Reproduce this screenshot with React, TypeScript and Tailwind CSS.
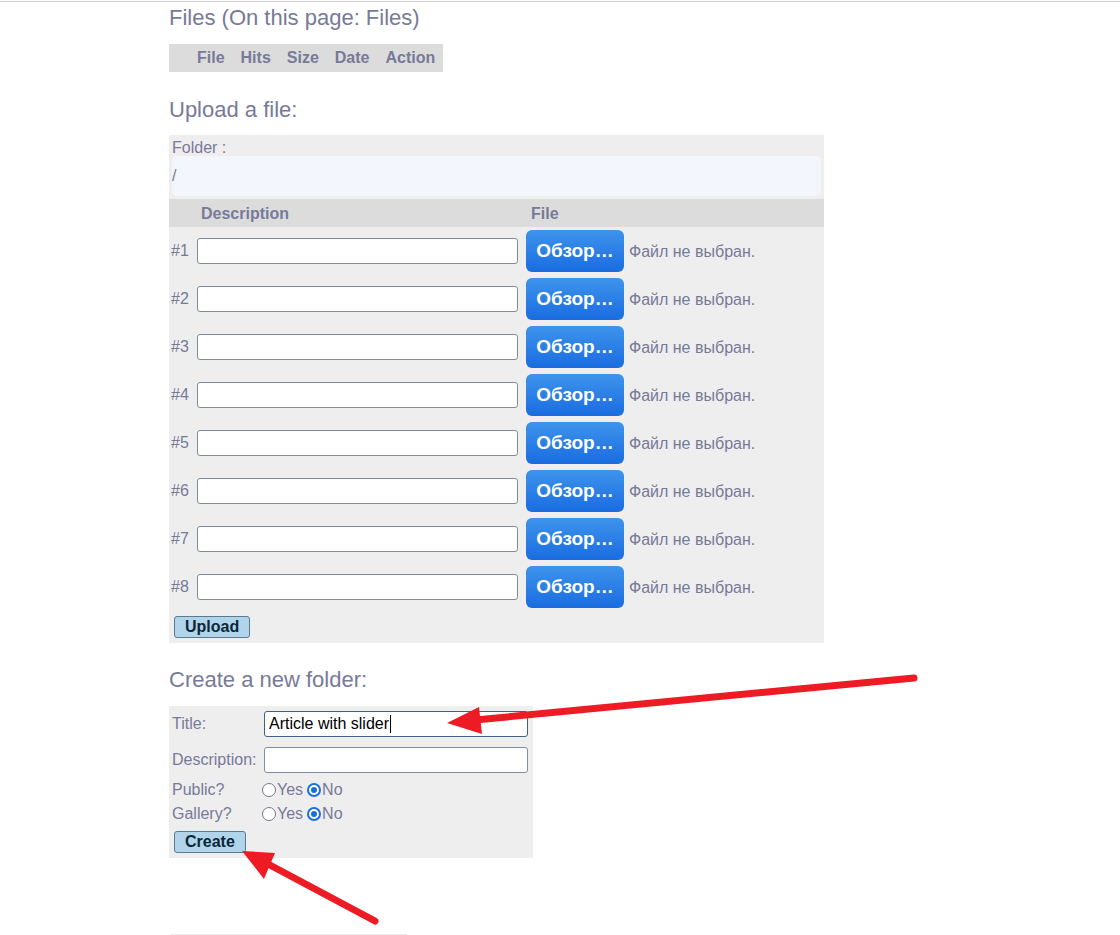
import React from "react";

const C = "text-[#777a98]";

function FileRow({ n }: { n: number }) {
  return (
    <div className="flex h-[48px] items-center pl-[2px]">
      <div className={`w-[26px] text-[16px] ${C}`}>#{n}</div>
      <div className="h-[26px] w-[321px] rounded-[3px] border border-[#7d8d9d] bg-white" />
      <div className="ml-[8px] flex h-[42px] w-[98px] items-center justify-center rounded-[6px] bg-gradient-to-b from-[#3e93ec] to-[#1a6ce0] text-[19px] font-bold text-white">
        Обзор…
      </div>
      <div className={`ml-[5px] pt-[2px] text-[16px] ${C}`}>Файл не выбран.</div>
    </div>
  );
}

function Radio({ checked }: { checked?: boolean }) {
  return checked ? (
    <span className="mx-px flex h-[14px] w-[14px] shrink-0 items-center justify-center rounded-full border-2 border-[#1a6fe0] bg-white">
      <span className="h-[6px] w-[6px] rounded-full bg-[#1a6fe0]" />
    </span>
  ) : (
    <span className="mx-px block h-[14px] w-[14px] shrink-0 rounded-full border-[1.5px] border-[#767684] bg-white" />
  );
}

function RadioRow({ label }: { label: string }) {
  return (
    <div className={`flex h-[24px] items-center text-[16px] ${C}`}>
      <div className="w-[92px] pl-[3px]">{label}</div>
      <div className="flex items-center">
        <Radio />
        <span>Yes</span>
        <span className="w-[3px]" />
        <Radio checked />
        <span>No</span>
      </div>
    </div>
  );
}

export default function App() {
  return (
    <div
      className="relative h-[935px] w-[1120px] overflow-hidden bg-white"
      style={{ fontFamily: '"Liberation Sans", Arial, sans-serif' }}
    >
      <div className="mt-px h-px w-full bg-[#cccccc]" />
      <div className="pl-[169px]">
        <div className={`mt-[3px] text-[22px] leading-[25px] ${C}`}>Files (On this page: Files)</div>

        <div className={`mt-[14px] flex h-[28px] w-[274px] items-center bg-[#dcdcdc] pl-[20px] text-[16px] font-bold leading-[28px] ${C}`}>
          <span className="px-[8px]">File</span>
          <span className="px-[8px]">Hits</span>
          <span className="px-[8px]">Size</span>
          <span className="px-[8px]">Date</span>
          <span className="px-[8px]">Action</span>
        </div>

        <div className={`mt-[25px] text-[22px] leading-[25px] ${C}`}>Upload a file:</div>

        <div className="mt-[13px] w-[655px] bg-[#eeeeee] pb-[5px] pt-[4px]">
          <div className={`pl-[3px] text-[16px] leading-[17px] ${C}`}>Folder :</div>
          <div className={`mx-[3px] flex h-[40px] items-center rounded-[5px] bg-[#f3f6fc] text-[16px] ${C}`}>/</div>
          <div className={`mt-[3px] flex h-[28px] items-center bg-[#dcdcdc] pt-[1px] text-[16px] font-bold ${C}`}>
            <span className="w-[362px] pl-[32px]">Description</span>
            <span>File</span>
          </div>
          {[1, 2, 3, 4, 5, 6, 7, 8].map((n) => (
            <FileRow key={n} n={n} />
          ))}
          <div className="mt-[5px] flex pl-[5px]">
            <div className="flex h-[22px] items-center rounded-[3px] border border-[#5a7a90] bg-[#b0d4ea] px-[10px] text-[16px] font-bold text-[#0c2638]">
              Upload
            </div>
          </div>
        </div>

        <div className={`mt-[24px] text-[22px] leading-[25px] ${C}`}>Create a new folder:</div>

        <div className="mt-[14px] w-[364px] bg-[#eeeeee] pb-[5px] pt-[5px]">
          <div className={`flex h-[26px] items-center text-[16px] ${C}`}>
            <div className="w-[95px] pl-[3px]">Title:</div>
            <div className="flex h-[26px] w-[264px] items-center rounded-[3px] border border-[#3d6282] bg-white pl-[4px] text-[16px] text-black">
              Article with slider
              <span className="ml-px inline-block h-[18px] w-px bg-black" />
            </div>
          </div>
          <div className={`mt-[10px] flex h-[26px] items-center text-[16px] ${C}`}>
            <div className="w-[95px] pl-[3px]">Description:</div>
            <div className="h-[26px] w-[264px] rounded-[3px] border border-[#7d8fa0] bg-white" />
          </div>
          <div className="mt-[5px]">
            <RadioRow label="Public?" />
            <RadioRow label="Gallery?" />
          </div>
          <div className="mt-[5px] flex pl-[5px]">
            <div className="flex h-[22px] items-center rounded-[3px] border border-[#5a7a90] bg-[#b0d4ea] px-[10px] text-[16px] font-bold text-[#0c2638]">
              Create
            </div>
          </div>
        </div>

        <div className="ml-[2px] mt-[76px] h-px w-[236px] bg-[#ececec]" />
      </div>

      <svg className="pointer-events-none absolute left-0 top-0" width="1120" height="935" viewBox="0 0 1120 935">
        <line x1="914" y1="678" x2="475" y2="720" stroke="#ed1c24" strokeWidth="7" strokeLinecap="round" />
        <polygon points="447,723 479,707 482,734" fill="#ed1c24" />
        <line x1="375" y1="921" x2="268" y2="864" stroke="#ed1c24" strokeWidth="7" strokeLinecap="round" />
        <polygon points="242,851 275,853 264,879" fill="#ed1c24" />
      </svg>
    </div>
  );
}
